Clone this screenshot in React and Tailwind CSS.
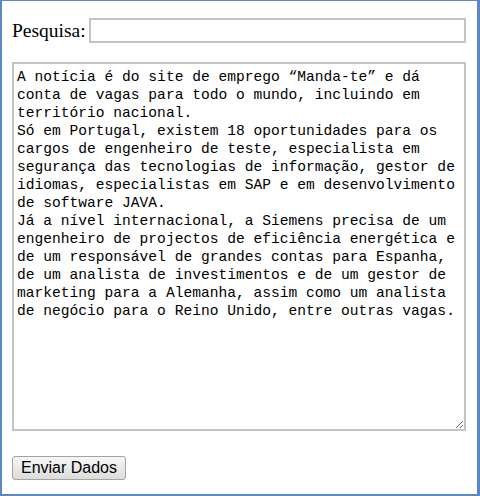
const texto = `A notícia é do site de emprego “Manda-te” e dá conta de vagas para todo o mundo, incluindo em território nacional.
Só em Portugal, existem 18 oportunidades para os cargos de engenheiro de teste, especialista em segurança das tecnologias de informação, gestor de idiomas, especialistas em SAP e em desenvolvimento de software JAVA.
Já a nível internacional, a Siemens precisa de um engenheiro de projectos de eficiência energética e de um responsável de grandes contas para Espanha, de um analista de investimentos e de um gestor de marketing para a Alemanha, assim como um analista de negócio para o Reino Unido, entre outras vagas.`;

export default function App() {
  return (
    <div className="w-[480px] h-[496px] bg-white border-[#5b87c9] border-l-2 border-t border-r-[3px] border-b-2 pl-[10px] pr-[11px] pt-[17px]">
      {/* Pesquisa */}
      <div className="flex items-center">
        <label className="text-[19.5px] leading-[22px] text-black mr-[3px] font-['Liberation_Serif',serif]">
          Pesquisa:
        </label>
        <input
          type="text"
          className="flex-1 h-[25px] border-2 border-[#c4c4c4] bg-white outline-none px-1"
        />
      </div>

      {/* Texto */}
      <textarea
        readOnly
        defaultValue={texto}
        className="block mt-[19px] w-[454px] h-[369px] border-2 border-[#c4c4c4] bg-white px-[3px] pt-[4px] text-[14.6px] leading-[18px] text-black outline-none resize font-['Liberation_Mono',monospace]"
      />

      <button className="mt-[25px] w-[114px] h-[24px] rounded-[3px] border border-[#a3a3a3] bg-gradient-to-b from-[#f7f7f7] to-[#dcdcdc] text-[16px] leading-none text-black font-['Liberation_Sans',Arial,sans-serif]">
        Enviar Dados
      </button>
    </div>
  );
}
